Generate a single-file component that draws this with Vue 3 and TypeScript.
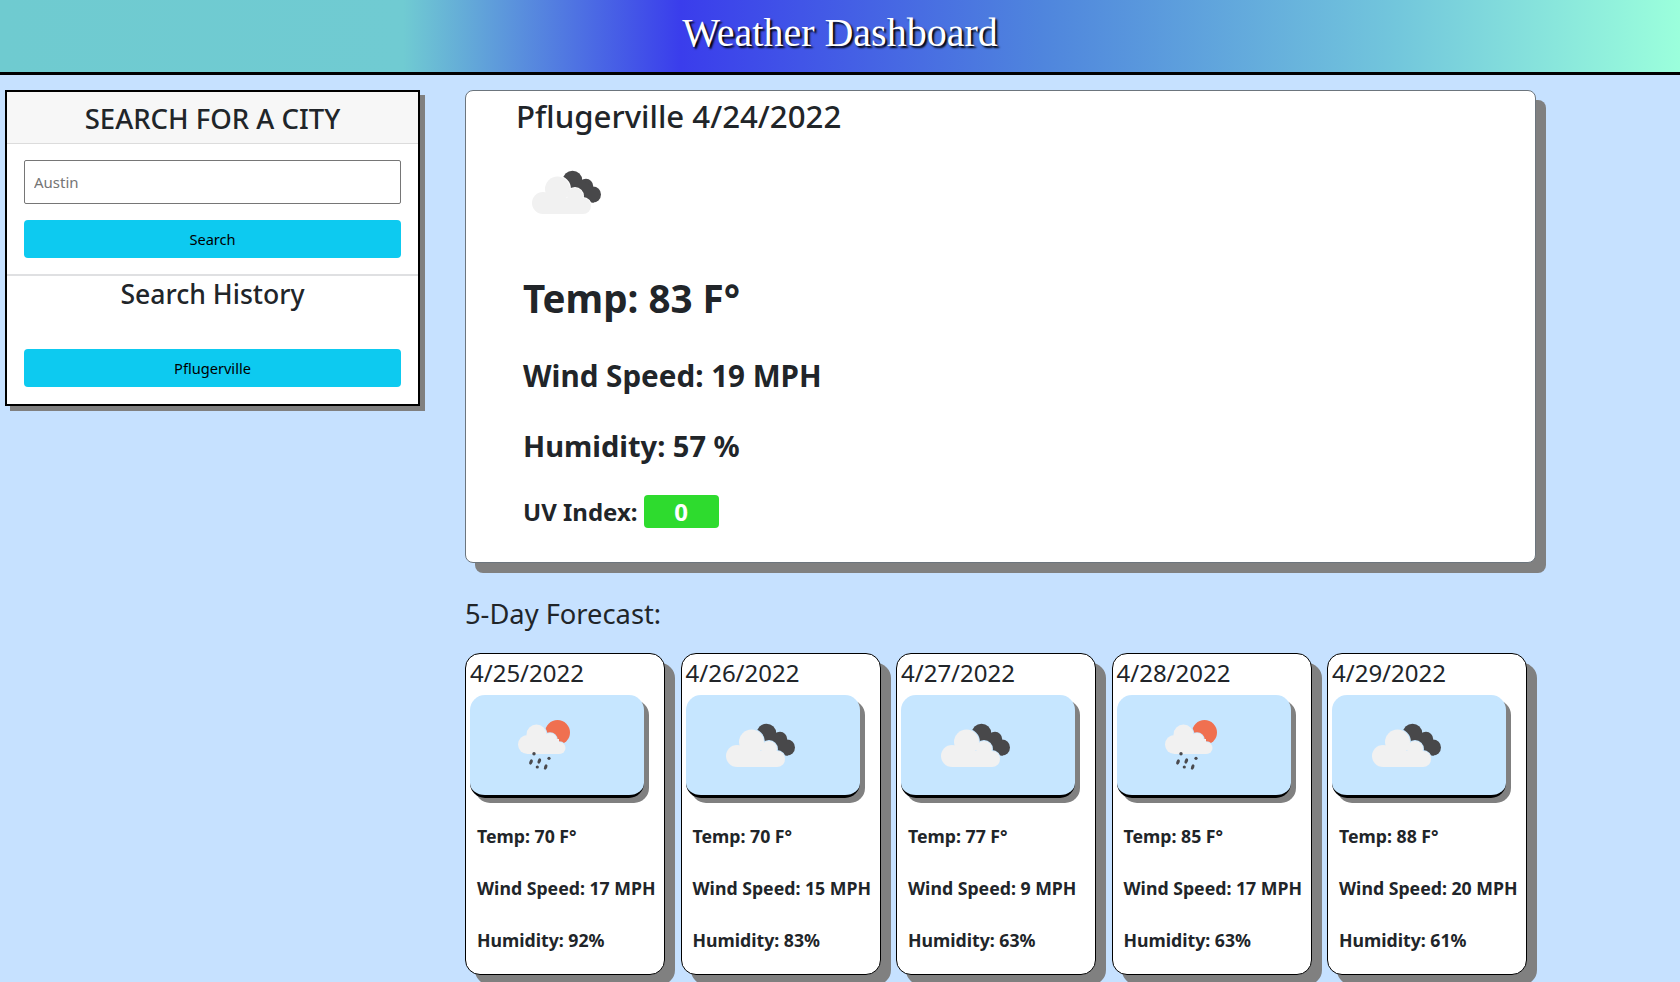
<script setup lang="ts">
interface Day {
  date: string
  icon: string
  temp: number
  wind: number
  hum: number
}
const days: Day[] = [
  { date: '4/25/2022', icon: '#ic-rain', temp: 70, wind: 17, hum: 92 },
  { date: '4/26/2022', icon: '#ic-clouds', temp: 70, wind: 15, hum: 83 },
  { date: '4/27/2022', icon: '#ic-clouds', temp: 77, wind: 9, hum: 63 },
  { date: '4/28/2022', icon: '#ic-rain', temp: 85, wind: 17, hum: 63 },
  { date: '4/29/2022', icon: '#ic-clouds', temp: 88, wind: 20, hum: 61 },
]
</script>

<template>
  <svg class="defs" width="0" height="0" aria-hidden="true">
    <defs>
      <mask id="m-clouds" maskUnits="userSpaceOnUse" x="0" y="0" width="100" height="100">
        <rect width="100" height="100" fill="#fff" />
        <g fill="#000" stroke="#000" stroke-width="2">
          <circle cx="27" cy="61" r="11" /><circle cx="41.5" cy="47" r="12.5" />
          <circle cx="59" cy="54" r="8" /><circle cx="67" cy="64" r="8" />
        </g>
      </mask>
      <symbol id="ic-clouds" viewBox="0 0 100 100">
        <g fill="#48484a" mask="url(#m-clouds)">
          <circle cx="56.5" cy="38.5" r="9.8" /><circle cx="70" cy="44" r="7.2" /><circle cx="77" cy="52.5" r="8" />
          <path d="M50 36 64 36 78 46 78 60.5 60 60.5 48 46Z" />
        </g>
        <g fill="#f1f1f1">
          <circle cx="27" cy="61" r="11" /><circle cx="41.5" cy="47" r="12.5" />
          <circle cx="59" cy="54" r="8" /><circle cx="67" cy="64" r="8" />
          <rect x="27" y="56" width="40" height="16" />
        </g>
      </symbol>
      <mask id="m-rain" maskUnits="userSpaceOnUse" x="0" y="0" width="100" height="100">
        <rect width="100" height="100" fill="#fff" />
        <g fill="#000" stroke="#000" stroke-width="1.6">
          <circle cx="33.5" cy="49.5" r="9.5" /><circle cx="42.5" cy="39.5" r="10" />
          <circle cx="56" cy="45" r="7" /><circle cx="65.5" cy="53" r="6" />
        </g>
      </mask>
      <symbol id="ic-rain" viewBox="0 0 100 100">
        <circle cx="63.5" cy="37.5" r="12.5" fill="#f07050" mask="url(#m-rain)" />
        <g fill="#f1f1f1">
          <circle cx="33.5" cy="49.5" r="9.5" /><circle cx="42.5" cy="39.5" r="10" />
          <circle cx="56" cy="45" r="7" /><circle cx="65.5" cy="53" r="6" />
          <rect x="33" y="44" width="32" height="15" />
        </g>
        <g fill="#4a4a4e">
          <circle cx="40" cy="58.8" r="1.7" /><circle cx="55" cy="63.3" r="1.6" /><circle cx="43.3" cy="72" r="1.6" />
          <ellipse cx="37" cy="67" rx="1.6" ry="2.7" transform="rotate(20 37 67)" />
          <ellipse cx="45.3" cy="66" rx="1.6" ry="2.7" transform="rotate(20 45.3 66)" />
          <ellipse cx="51.7" cy="72" rx="1.6" ry="2.7" transform="rotate(20 51.7 72)" />
        </g>
      </symbol>
    </defs>
  </svg>

  <header class="banner"><h1>Weather Dashboard</h1></header>

  <div class="layout">
    <aside class="search-card">
      <h2 class="search-head">SEARCH FOR A CITY</h2>
      <div class="search-body">
        <input class="city" type="text" placeholder="Austin" />
        <button class="btn" type="button">Search</button>
      </div>
      <hr class="rule" />
      <h3 class="history-title">Search History</h3>
      <div class="history">
        <button class="btn" type="button">Pflugerville</button>
      </div>
    </aside>

    <main class="content">
      <section class="today">
        <h2 class="today-title">Pflugerville 4/24/2022</h2>
        <svg class="today-icon" width="100" height="100"><use href="#ic-clouds" /></svg>
        <div class="today-temp">Temp: 83 F°</div>
        <div class="today-line">Wind Speed: 19 MPH</div>
        <div class="today-line today-hum">Humidity: 57 %</div>
        <div class="today-uv">UV Index: <span class="uv-badge">0</span></div>
      </section>

      <h3 class="forecast-title">5-Day Forecast:</h3>
      <div class="forecast">
        <article v-for="d in days" :key="d.date" class="day">
          <div class="day-date">{{ d.date }}</div>
          <div class="day-image">
            <svg width="100" height="100"><use :href="d.icon" /></svg>
          </div>
          <div class="day-stats">
            <div>Temp: {{ d.temp }} F°</div>
            <div>Wind Speed: {{ d.wind }} MPH</div>
            <div>Humidity: {{ d.hum }}%</div>
          </div>
        </article>
      </div>
    </main>
  </div>
</template>

<style>
html, body { margin: 0; background: #c6e1ff; height: 982px; overflow: hidden; }
</style>

<style scoped>
* { box-sizing: border-box; }
.defs { position: absolute; }
.banner {
  height: 75px;
  border-bottom: 3px solid #000;
  background: linear-gradient(90deg, #6fcbd0 0%, #70cbd2 24%, #3a3dec 40.5%, #4f85dd 62%, #72c6dc 83%, #9bffdc 100%);
  display: flex;
  align-items: center;
  justify-content: center;
  padding-bottom: 8px;
}
.banner h1 {
  margin: 0;
  font: 400 40px "Liberation Serif", serif;
  color: #fff;
  text-shadow: 2px 2px 2px #000;
}
.layout {
  display: flex;
  align-items: flex-start;
  padding: 15px 0 0 5px;
  gap: 45px;
  font-family: "Noto Sans", sans-serif;
  color: #212529;
}
.search-card {
  width: 415px;
  flex: none;
  border: 2px solid #000;
  background: #fff;
  box-shadow: 5px 5px 0 #808080;
  height: 316px;
}
.search-head {
  margin: 0;
  height: 52px;
  background: #f7f7f7;
  border-bottom: 1px solid #dcdcdc;
  font-size: 27.5px;
  font-weight: 500;
  line-height: 54px;
  text-align: center;
}
.search-body { padding: 16px 17px 0; display: flex; flex-direction: column; gap: 16px; }
.city {
  height: 44px;
  width: 100%;
  border: 1px solid #767676;
  border-radius: 2px;
  padding: 0 9px;
  font: 15px "Noto Sans", sans-serif;
  outline: none;
}
.city::placeholder { color: #757575; opacity: 1; }
.btn {
  display: block;
  width: 100%;
  height: 38px;
  border: 0;
  border-radius: 4px;
  background: #0dcaf0;
  color: #000;
  font: 14.6px "Noto Sans", sans-serif;
}
.rule { margin: 16px 0 0; height: 2px; border: 0; background: #dfe0e2; }
.history-title {
  margin: 0;
  font-size: 26.6px;
  font-weight: 500;
  line-height: 37px;
  text-align: center;
}
.history { padding: 36px 17px 0; }
.content { width: 1071px; flex: none; }
.today {
  height: 473px;
  background: #fff;
  border: 1px solid #6c757d;
  border-radius: 8px;
  box-shadow: 10px 10px 0 #808080;
  padding: 0 0 0 50px;
}
.today-title { margin: 0; font-size: 31.2px; font-weight: 500; line-height: 51px; }
.today-icon { display: block; }
.today-temp, .today-line, .today-uv { margin-left: 7px; font-weight: 700; }
.today-temp { margin-top: 28px; font-size: 38.6px; line-height: 56px; }
.today-line { font-size: 29.6px; line-height: 38px; margin-top: 32px; }
.today-temp + .today-line { margin-top: 31px; }
.today-hum { font-size: 29px; }
.today-uv { font-size: 24px; line-height: 34px; margin-top: 30px; display: flex; align-items: center; gap: 6px; }
.uv-badge {
  width: 75px;
  height: 33px;
  margin-top: -2px;
  background: #2edb2e;
  color: #fff;
  border-radius: 4px;
  text-align: center;
  line-height: 33px;
}
.forecast-title { margin: 31px 0 0; font-size: 27.3px; font-weight: 400; line-height: 40px; }
.forecast { display: flex; gap: 15.5px; margin-top: 19px; }
.day {
  width: 200px;
  height: 322px;
  flex: none;
  background: #fff;
  border: 1px solid #000;
  border-radius: 15px;
  box-shadow: 10px 10px 0 #808080;
  padding: 0 4px;
}
.day-date { font-size: 24px; line-height: 36px; margin-top: 1px; }
.day-image {
  width: 174px;
  height: 103px;
  margin-top: 4px;
  padding-left: 24px;
  background: #c6e6ff;
  border-bottom: 3px solid #000;
  border-radius: 15px;
  box-shadow: 5px 5px 0 #808080;
}
.day-image svg { display: block; }
.day-stats {
  margin-top: 26px;
  padding-left: 7px;
  font-size: 17.7px;
  font-weight: 700;
  line-height: 24px;
  display: flex;
  flex-direction: column;
  gap: 28px;
  white-space: nowrap;
}
</style>
